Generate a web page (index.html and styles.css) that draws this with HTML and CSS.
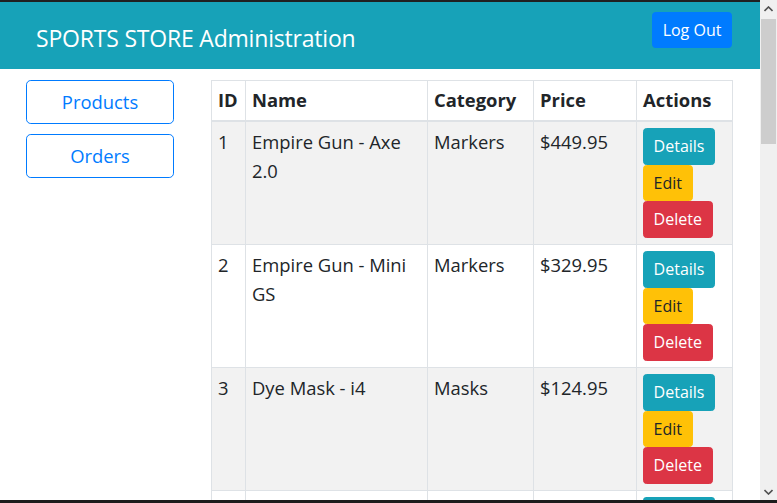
FILE: index.html
```html
<!DOCTYPE html>
<html>
<head>
<meta charset="utf-8">
<title>Sports Store Admin</title>
<link rel="stylesheet" href="styles.css">
</head>
<body>
<div class="window">
  <div class="screen">
    <div class="viewport">
      <header class="topbar">
        <span class="brand">SPORTS STORE Administration</span>
        <button class="btn btn-sm btn-primary">Log Out</button>
      </header>
      <div class="content">
        <nav class="sidebar">
          <button class="btn btn-outline">Products</button>
          <button class="btn btn-outline">Orders</button>
        </nav>
        <table class="table">
          <colgroup>
            <col class="c-id"><col class="c-name"><col class="c-cat"><col class="c-price"><col class="c-act">
          </colgroup>
          <thead>
            <tr><th>ID</th><th>Name</th><th>Category</th><th>Price</th><th>Actions</th></tr>
          </thead>
          <tbody>
            <tr class="odd">
              <td>1</td><td>Empire Gun - Axe 2.0</td><td>Markers</td><td>$449.95</td>
              <td><div class="actions"><button class="btn btn-sm btn-info">Details</button><button class="btn btn-sm btn-warning">Edit</button><button class="btn btn-sm btn-danger">Delete</button></div></td>
            </tr>
            <tr>
              <td>2</td><td>Empire Gun - Mini GS</td><td>Markers</td><td>$329.95</td>
              <td><div class="actions"><button class="btn btn-sm btn-info">Details</button><button class="btn btn-sm btn-warning">Edit</button><button class="btn btn-sm btn-danger">Delete</button></div></td>
            </tr>
            <tr class="odd">
              <td>3</td><td>Dye Mask - i4</td><td>Masks</td><td>$124.95</td>
              <td><div class="actions"><button class="btn btn-sm btn-info">Details</button><button class="btn btn-sm btn-warning">Edit</button><button class="btn btn-sm btn-danger">Delete</button></div></td>
            </tr>
            <tr class="cut">
              <td></td><td></td><td></td><td></td>
              <td><div class="actions"><span class="btn-stub"></span></div></td>
            </tr>
          </tbody>
        </table>
      </div>
    </div>
    <div class="scrollbar">
      <div class="sb-arrow">
        <svg width="9" height="6" viewBox="0 0 9 6"><path d="M0.5 5 L4.5 1 L8.5 5" fill="none" stroke="#505050" stroke-width="1.6"/></svg>
      </div>
      <div class="sb-track"><div class="sb-thumb"></div></div>
      <div class="sb-arrow">
        <svg width="9" height="6" viewBox="0 0 9 6"><path d="M0.5 1 L4.5 5 L8.5 1" fill="none" stroke="#505050" stroke-width="1.6"/></svg>
      </div>
    </div>
  </div>
  <div class="taskbar"></div>
</div>
</body>
</html>
```
FILE: styles.css
```css
* { box-sizing: border-box; }
html, body { margin: 0; padding: 0; }
body {
  font-family: "Open Sans", "Noto Sans", sans-serif;
  color: #212529;
  background: #fff;
  width: 777px;
  height: 503px;
  overflow: hidden;
}
.window { display: flex; flex-direction: column; width: 777px; height: 503px; }
.screen { display: flex; flex: 1; min-height: 0; }
.viewport {
  width: 760px;
  height: 500px;
  overflow: hidden;
  border-top: 2px solid #202020;
  background: #fff;
}
.taskbar { height: 3px; background: #1c1c1c; }

.scrollbar {
  width: 17px;
  background: #f0f0f0;
  display: flex;
  flex-direction: column;
}
.sb-arrow {
  height: 17px;
  display: flex;
  align-items: center;
  justify-content: center;
}
.sb-track { flex: 1; padding: 2px 1px 0 1px; }
.sb-thumb { height: 125px; background: #cdcdcd; }

.topbar {
  background: #17a2b8;
  height: 67px;
  display: flex;
  justify-content: space-between;
  align-items: flex-start;
  padding: 0 28px 0 36px;
}
.brand {
  color: #fff;
  font-size: 23px;
  line-height: 36px;
  margin-top: 18px;
  letter-spacing: -0.2px;
}

.btn {
  font-family: inherit;
  display: inline-block;
  border: 1px solid transparent;
  border-radius: 4.8px;
  font-size: 18.4px;
  line-height: 1.5;
  padding: 0 12px;
  cursor: pointer;
  text-align: center;
  color: #fff;
}
.btn-sm {
  font-size: 16px;
  line-height: 25px;
  padding: 5px 9.6px;
  border-radius: 3.6px;
}
.topbar .btn-sm { margin-top: 10px; height: 36px; }
.btn-primary { background: #007bff; border-color: #007bff; }
.btn-info { background: #17a2b8; border-color: #17a2b8; }
.btn-warning { background: #ffc107; border-color: #ffc107; color: #212529; }
.btn-danger { background: #dc3545; border-color: #dc3545; }
.btn-outline {
  background: #fff;
  color: #007bff;
  border-color: #007bff;
  width: 148px;
  height: 44px;
}
.btn-stub {
  display: block;
  width: 72px;
  height: 37px;
  border-radius: 3.6px;
  background: #17a2b8;
}

.content {
  display: flex;
  align-items: flex-start;
  padding: 11px 28px 0 26px;
}
.sidebar {
  display: flex;
  flex-direction: column;
  gap: 10px;
  width: 148px;
  flex-shrink: 0;
}
.table {
  margin-left: 37px;
  width: 521px;
  table-layout: fixed;
  border-collapse: collapse;
  font-size: 18.4px;
  line-height: 28.8px;
  border: 1px solid #dee2e6;
}
.c-id { width: 34px; }
.c-name { width: 182px; }
.c-cat { width: 106px; }
.c-price { width: 103px; }
.c-act { width: 96px; }
.table th, .table td {
  border: 1px solid #dee2e6;
  padding: 6px;
  vertical-align: top;
  text-align: left;
}
.table th {
  font-weight: 700;
  border-bottom-width: 2px;
  padding: 5px 6px 5px;
}
.table tr.odd td { background: #f2f2f2; }
.actions {
  display: flex;
  flex-direction: column;
  align-items: flex-start;
}
.actions .btn-warning { height: 36px; line-height: 24px; }
```
